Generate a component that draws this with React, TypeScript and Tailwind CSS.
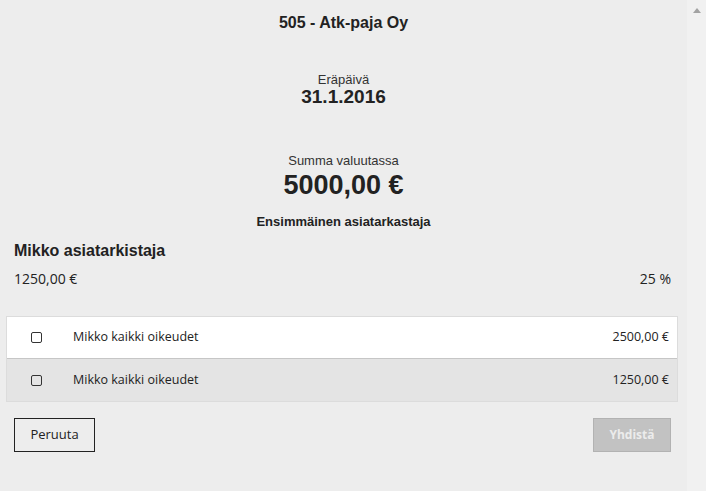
import React from "react";

function Checkbox() {
  return <div className="w-[11px] h-[11px] rounded-[2px] border border-[#333] shrink-0" />;
}

function Row({ name, amount, className }: { name: string; amount: string; className: string }) {
  return (
    <div className={`flex items-center h-[42px] ${className}`}>
      <div className="pl-[24px]">
        <Checkbox />
      </div>
      <div className="ml-[31px] flex-1 text-[12.5px] text-[#222]">{name}</div>
      <div className="pr-[8px] text-[12.5px] text-[#222]">{amount}</div>
    </div>
  );
}

export default function App() {
  return (
    <div className="flex w-[706px] h-[491px] bg-[#ededed] overflow-hidden text-[#222]">
      <div className="w-[687px] flex flex-col">
        <div className="font-['Liberation_Sans',Arial,sans-serif] flex flex-col">
          <div className="mt-[13px] h-[20px] leading-[20px] text-center text-[16px] font-bold">
            505 - Atk-paja Oy
          </div>
          <div className="mt-[40px] h-[14px] leading-[14px] text-center text-[13px] text-[#333]">Eräpäivä</div>
          <div className="h-[20px] leading-[20px] text-center text-[19px] font-bold">31.1.2016</div>
          <div className="mt-[46px] h-[16px] leading-[16px] text-center text-[13px] text-[#333]">
            Summa valuutassa
          </div>
          <div className="h-[32px] leading-[32px] text-center text-[27px] font-bold">5000,00 €</div>
          <div className="mt-[13px] h-[16px] leading-[16px] text-center text-[13px] font-bold">
            Ensimmäinen asiatarkastaja
          </div>
          <div className="mt-[11px] ml-[14px] h-[20px] leading-[20px] text-[16px] font-bold">
            Mikko asiatarkistaja
          </div>
        </div>
        <div className="font-['Open_Sans',sans-serif] flex flex-col">
          <div className="mt-[8px] ml-[14px] mr-[16px] h-[20px] leading-[20px] flex justify-between text-[14px]">
            <span>1250,00 €</span>
            <span>25 %</span>
          </div>
          <div className="mt-[27px] ml-[6px] mr-[9px] border border-[#dcdcdc]">
            <Row name="Mikko kaikki oikeudet" amount="2500,00 €" className="bg-white border-b border-[#c6c6c6]" />
            <Row name="Mikko kaikki oikeudet" amount="1250,00 €" className="bg-[#e4e4e4]" />
          </div>
          <div className="mt-[16px] ml-[14px] mr-[16px] flex justify-between">
            <button className="w-[81px] h-[34px] border border-[#222] bg-transparent text-[13px] text-[#222]">
              Peruuta
            </button>
            <button className="w-[78px] h-[34px] border border-[#b2b2b2] bg-[#c2c2c2] text-[12px] font-bold text-[#ececec]">
              Yhdistä
            </button>
          </div>
        </div>
      </div>
      <div className="w-[19px] h-full bg-[#f1f1f1] flex justify-center pt-[8px]">
        <svg width="8" height="5" viewBox="0 0 8 5">
          <path d="M4 0 L8 5 L0 5 Z" fill="#a3a3a3" />
        </svg>
      </div>
    </div>
  );
}
